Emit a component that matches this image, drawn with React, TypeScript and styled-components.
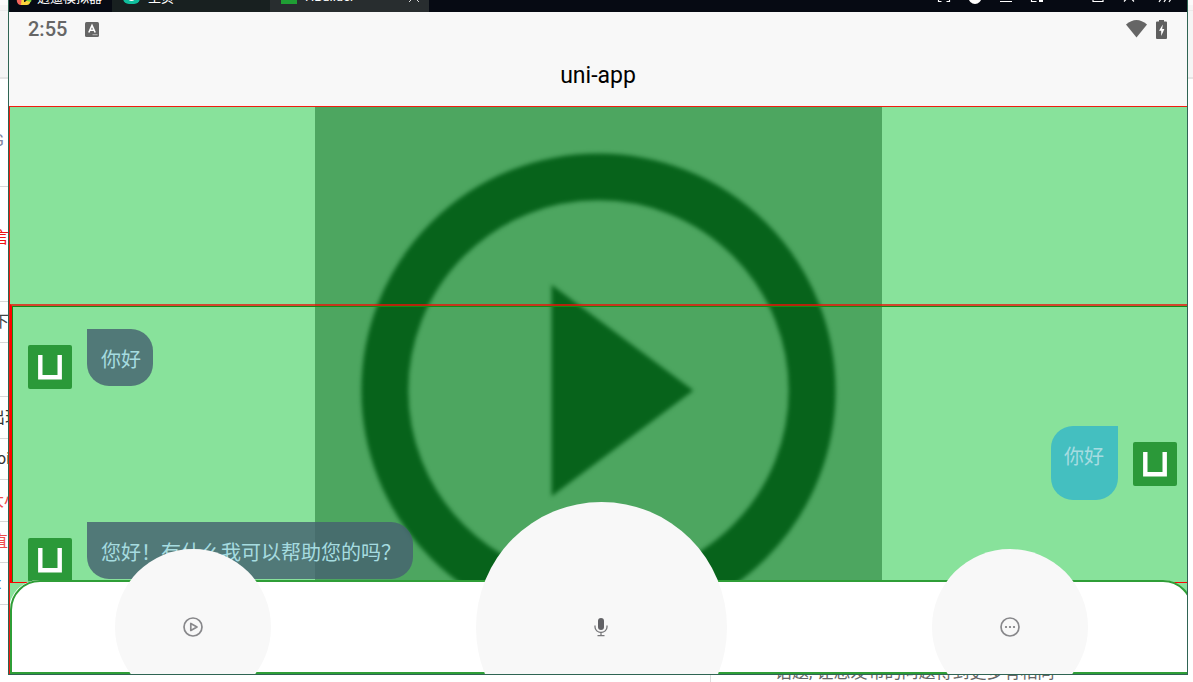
import React from "react";
import styled, { createGlobalStyle } from "styled-components";

const Reset = createGlobalStyle`
  *, *::before, *::after { box-sizing: border-box; }
  body {
    margin: 0;
    background: #fff;
    font-family: Roboto, "Noto Sans CJK SC", sans-serif;
    overflow: hidden;
  }
  button { font: inherit; border: 0; padding: 0; margin: 0; cursor: pointer; }
`;

const Desktop = styled.div`
  display: grid;
  grid-template-columns: 8px minmax(0, 1fr) 5px;
  grid-template-rows: minmax(0, 1fr) 7px;
  height: 100vh;
  min-height: 480px;
  overflow: hidden;
`;

const Gutter = styled.aside`
  overflow: hidden;
`;

const GutterTop = styled.div`
  height: 79px;
  border-top: 5px solid #fbfbfb;
  border-bottom: 2px solid #e5e5e5;
  background: linear-gradient(#f5f5f5 5px, #ebebeb 5px, #ebebeb 6px, #f5f5f5 6px);
`;

const GutterRow = styled.div<{ $height: number; $indent: number; $color: string; $padding?: string }>`
  display: flex;
  align-items: center;
  height: ${(p) => p.$height}px;
  padding: ${(p) => p.$padding ?? "0"};
  border-bottom: 1px solid #d8d8d8;
  font-size: 16px;
  line-height: 20px;
  white-space: nowrap;
  text-indent: ${(p) => p.$indent}px;
  color: ${(p) => p.$color};
`;

const Window = styled.section`
  display: flex;
  flex-direction: column;
  min-width: 0;
  border: solid #2f6453;
  border-width: 0 1px 1px;
  background: #f8f8f8;
  overflow: hidden;
`;

const TitleBar = styled.header`
  display: flex;
  align-items: flex-end;
  flex: none;
  height: 12px;
  overflow: hidden;
  background: #060a13;
  color: #fff;
  font-size: 13px;
`;

const Brand = styled.div`
  display: flex;
  flex: none;
  align-items: center;
  gap: 4px;
  width: 103px;
  height: 32px;
  padding-left: 7px;
`;

const Tab = styled.button<{ $active?: boolean }>`
  display: flex;
  flex: none;
  align-items: center;
  gap: 8px;
  width: ${(p) => (p.$active ? 159 : 158)}px;
  height: 32px;
  padding: 0 10px 0 11px;
  background: ${(p) => (p.$active ? "#282d2f" : "#182020")};
  color: #fff;
  font-size: 13px;
`;

const TabLabel = styled.span`
  flex: 1;
  text-align: left;
`;

const WindowTools = styled.div`
  display: flex;
  align-items: center;
  gap: 15px;
  height: 30px;
  margin-left: auto;
  padding-right: 14px;
`;

const ToolButton = styled.button<{ $before?: number }>`
  display: flex;
  width: 16px;
  height: 16px;
  margin-left: ${(p) => p.$before ?? 0}px;
  background: none;
  color: #fff;
`;

const StatusBar = styled.div`
  display: flex;
  flex: none;
  align-items: center;
  height: 34px;
  padding: 0 20px 0 19px;
  color: #666;
`;

const Clock = styled.time`
  margin-right: 18px;
  font-size: 20px;
  font-weight: 500;
  line-height: 24px;
`;

const StatusIcons = styled.div`
  display: flex;
  align-items: center;
  gap: 9px;
  margin-left: auto;
`;

const NavBar = styled.div`
  display: flex;
  flex: none;
  align-items: center;
  justify-content: center;
  height: 60px;
`;

const NavTitle = styled.h1`
  margin: 0;
  font-size: 23px;
  font-weight: 400;
  line-height: 28px;
  color: #000;
`;

const Stage = styled.main`
  position: relative;
  display: flex;
  flex: 1;
  flex-direction: column;
  min-height: 0;
  border: solid #f01c10;
  border-width: 1px 0 0 1px;
  background: #88e29b;
  overflow: hidden;
`;

const Artwork = styled.svg`
  position: absolute;
  inset: 0;
  width: 100%;
  height: 100%;
`;

const Scroller = styled.div`
  position: relative;
  flex: none;
  height: 279px;
  margin-top: auto;
  border: solid #f00;
  border-width: 2px 0 1px 2px;
  border-top-color: rgba(238, 16, 8, 0.75);
`;

const MessageList = styled.ul`
  height: 100%;
  margin: 0;
  padding: 22px 10px 0 15px;
  border: solid #138a18;
  border-width: 1px 0 0 1px;
  list-style: none;
  overflow: hidden;
`;

const Message = styled.li<{ $mine?: boolean }>`
  display: flex;
  flex-direction: ${(p) => (p.$mine ? "row-reverse" : "row")};
  align-items: flex-start;
  gap: 15px;
  height: ${(p) => (p.$mine ? 96 : 97)}px;
`;

const Avatar = styled.svg`
  flex: none;
  width: 44px;
  height: 44px;
  margin-top: 16px;
`;

const Bubble = styled.p<{ $mine?: boolean }>`
  margin: 0;
  padding: ${(p) => (p.$mine ? "16px 14px 30px 13px" : "16px 12px 13px 14px")};
  border-radius: ${(p) => (p.$mine ? "22px 0 22px 22px" : "0 22px 22px 22px")};
  background: ${(p) => (p.$mine ? "#44bfc0" : "rgba(69, 98, 112, 0.82)")};
  color: #a6dce0;
  font-family: "Noto Sans CJK SC", sans-serif;
  font-size: 20px;
  line-height: 28px;
`;

const ActionBar = styled.footer`
  position: relative;
  display: flex;
  flex: none;
  align-items: center;
  justify-content: space-around;
  height: 94px;
  margin: -3px -6px 0 0;
  border: 2px solid #2f9e37;
  border-radius: 30px 30px 0 0;
  background: #fff;
  box-shadow: -1px 0 0 #fff;
`;

const RoundButton = styled.button<{ $size: number }>`
  display: flex;
  flex: none;
  align-items: center;
  justify-content: center;
  width: ${(p) => p.$size}px;
  height: ${(p) => p.$size}px;
  border-radius: 50%;
  background: #f8f8f8;
`;

const Underlay = styled.div`
  display: flex;
  grid-column: 1 / -1;
  align-items: flex-end;
  margin-left: 710px;
  padding-left: 64px;
  border-left: 1px solid #ddd;
  color: #666;
  font-size: 17px;
  line-height: 20px;
  white-space: nowrap;
  overflow: hidden;
`;

const gutterRows = [
  { height: 108, indent: -7, color: "#8486a0", text: "G", padding: "16px 0 0" },
  { height: 115, indent: -7, color: "#f01010", text: "言", padding: "0 0 12px" },
  { height: 41, indent: -7, color: "#444", text: "下" },
  { height: 54, indent: 0, color: "#444", text: "" },
  { height: 42, indent: -11, color: "#333", text: "出现" },
  { height: 41, indent: -3, color: "#333", text: "oi" },
  { height: 42, indent: -12, color: "#ee4c4c", text: "大小" },
  { height: 41, indent: -8, color: "#ee4c4c", text: "直" },
  { height: 42, indent: -4, color: "#3b87c8", text: "t" },
];

const messages = [
  { mine: false, text: "你好" },
  { mine: true, text: "你好" },
  { mine: false, text: "您好！有什么我可以帮助您的吗？" },
];

function UniLogo() {
  return (
    <Avatar viewBox="0 0 44 44" role="img" aria-label="avatar">
      <rect width="44" height="44" rx="2" fill="#2b9939" />
      <path d="M12.3 10v22.2h19.4V10" fill="none" stroke="#fff" strokeWidth="4.4" />
    </Avatar>
  );
}

function PlayArtwork() {
  return (
    <Artwork viewBox="0 0 568 568" aria-hidden="true">
      <defs>
        <filter id="soft" x="-20%" y="-20%" width="140%" height="140%" colorInterpolationFilters="sRGB">
          <feGaussianBlur stdDeviation="2" />
        </filter>
      </defs>
      <rect width="568" height="568" fill="#4da660" />
      <g filter="url(#soft)">
        <circle cx="284" cy="284" r="214" fill="none" stroke="#07631b" strokeWidth="47" />
        <path d="M237 178v212l142-106z" fill="#07631b" />
      </g>
    </Artwork>
  );
}

function ToolIcon({ children }: { children: React.ReactNode }) {
  return (
    <svg width="16" height="16" viewBox="0 0 16 16" fill="none" stroke="currentColor" strokeWidth="1.2" aria-hidden="true">
      {children}
    </svg>
  );
}

export default function App() {
  return (
    <>
      <Reset />
      <Desktop>
        <Gutter>
          <GutterTop />
          {gutterRows.map((row, i) => (
            <GutterRow key={i} $height={row.height} $indent={row.indent} $color={row.color} $padding={row.padding}>
              {row.text}
            </GutterRow>
          ))}
        </Gutter>

        <Window>
          <TitleBar>
            <Brand>
              <svg width="17" height="17" viewBox="0 0 17 17" aria-hidden="true">
                <path d="M0 5l6 0 1 12H4q-2 0-3-3z" fill="#f4655c" />
                <path d="M6 8l10 1-2 6q-1 2-3 2H5z" fill="#fbd43b" />
                <path d="M8 3l9 3-2 8-8-2z" fill="#7bd63c" />
                <path d="M8 10h3v2l-2 2H8z" fill="#1a1c18" />
              </svg>
              <span>逍遥模拟器</span>
            </Brand>
            <Tab>
              <svg width="17" height="16" viewBox="0 0 17 16" aria-hidden="true">
                <rect width="17" height="16" rx="6" fill="#10bd9c" />
                <path d="M5 9q0 4 3.500 4t3.500-4z" fill="#fff" />
              </svg>
              <TabLabel>主页</TabLabel>
            </Tab>
            <Tab $active>
              <svg width="16" height="16" viewBox="0 0 16 16" aria-hidden="true">
                <rect width="16" height="16" fill="#1f9e34" />
                <path d="M5 3v9M11 3v9M5 8h6" stroke="#dff5e2" strokeWidth="1.500" />
              </svg>
              <TabLabel>HBuilder</TabLabel>
              <svg width="10" height="12" viewBox="0 0 10 12" stroke="#ddd" aria-hidden="true">
                <path d="M0 2l10 10M10 2L0 12" />
              </svg>
            </Tab>
            <WindowTools>
              <ToolButton aria-label="Full screen">
                <ToolIcon><path d="M2.500 9v3.500h3M10.500 12.500h3V9" /></ToolIcon>
              </ToolButton>
              <ToolButton aria-label="Pet">
                <ToolIcon><circle cx="8" cy="8.500" r="6.500" fill="#fff" stroke="none" /></ToolIcon>
              </ToolButton>
              <ToolButton aria-label="Menu">
                <ToolIcon><path d="M2 12.500h12M2 7h12" /></ToolIcon>
              </ToolButton>
              <ToolButton aria-label="Windows">
                <ToolIcon>
                  <path d="M2.500 8v4.500h5" />
                  <path d="M10 9h4v4h-4z" fill="#fff" stroke="none" />
                </ToolIcon>
              </ToolButton>
              <ToolButton $before={30} aria-label="Maximise">
                <ToolIcon><path d="M3 3h10v9.500H3z" /></ToolIcon>
              </ToolButton>
              <ToolButton aria-label="Close">
                <ToolIcon><path d="M3 2l10 10.500M13 2L3 12.500" /></ToolIcon>
              </ToolButton>
              <ToolButton $before={5} aria-label="More">
                <ToolIcon><path d="M2 13l2-3M7 13l2-3M12 13l2-3" /></ToolIcon>
              </ToolButton>
            </WindowTools>
          </TitleBar>

          <StatusBar>
            <Clock>2:55</Clock>
            <svg width="14" height="15" viewBox="0 0 14 15" aria-hidden="true">
              <rect width="14" height="15" rx="1.500" fill="#666" />
              <path d="M3.800 10.500L7 3.500l3.200 7M5 8.300h4" fill="none" stroke="#fff" strokeWidth="1.600" />
              <path d="M7.500 12.700h5" stroke="#ccc" strokeWidth="0.800" />
            </svg>
            <StatusIcons>
              <svg width="21" height="18" viewBox="0 0 21 18" aria-hidden="true">
                <path d="M0 4.500Q10.500-4.500 21 4.500L10.500 17.500z" fill="#666" />
              </svg>
              <svg width="11" height="19" viewBox="0 0 11 19" aria-hidden="true">
                <path d="M3 0h5v1.600h2q1 0 1 1V18q0 1-1 1H1q-1 0-1-1V2.600q0-1 1-1h2z" fill="#5f5f5f" />
                <path d="M6.800 4.500L3 10.700h2.200V16L8.400 9H6.200z" fill="#fff" />
              </svg>
            </StatusIcons>
          </StatusBar>

          <NavBar>
            <NavTitle>uni-app</NavTitle>
          </NavBar>

          <Stage>
            <PlayArtwork />
            <Scroller>
              <MessageList>
                {messages.map((m, i) => (
                  <Message key={i} $mine={m.mine}>
                    <UniLogo />
                    <Bubble $mine={m.mine}>{m.text}</Bubble>
                  </Message>
                ))}
              </MessageList>
            </Scroller>
            <ActionBar>
              <RoundButton $size={156} aria-label="Play">
                <svg width="20" height="20" viewBox="0 0 20 20" fill="none" stroke="#88888b" strokeWidth="1.700" strokeLinejoin="round" aria-hidden="true">
                  <circle cx="10" cy="10" r="9" />
                  <path d="M7.800 6.500v7l6.200-3.500z" />
                </svg>
              </RoundButton>
              <RoundButton $size={251} aria-label="Record">
                <svg width="14" height="20" viewBox="0 0 14 20" fill="none" stroke="#77777a" strokeWidth="1.300" aria-hidden="true">
                  <rect x="4" y="1" width="6" height="12" rx="3" fill="#626266" stroke="none" />
                  <path d="M1 8.500v1.500a6 5.500 0 0 0 12 0V8.500M7 15.500v3M3.500 18.700h7" />
                </svg>
              </RoundButton>
              <RoundButton $size={156} aria-label="More">
                <svg width="20" height="20" viewBox="0 0 20 20" fill="none" stroke="#88888b" strokeWidth="1.700" aria-hidden="true">
                  <circle cx="10" cy="10" r="9" />
                  <g fill="#77777a" stroke="none">
                    <circle cx="6" cy="10" r="1.100" />
                    <circle cx="10" cy="10" r="1.100" />
                    <circle cx="14" cy="10" r="1.100" />
                  </g>
                </svg>
              </RoundButton>
            </ActionBar>
          </Stage>
        </Window>

        <Gutter>
          <GutterTop />
        </Gutter>

        <Underlay>话题, 让您发布的问题得到更多有相同</Underlay>
      </Desktop>
    </>
  );
}
